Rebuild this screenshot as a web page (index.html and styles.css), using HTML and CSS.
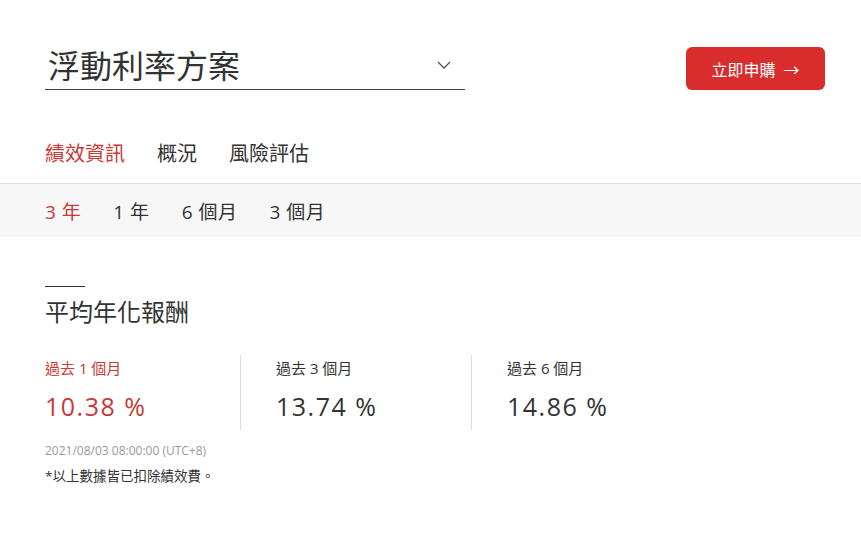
FILE: index.html
```html
<!DOCTYPE html>
<html lang="zh-Hant">
<head>
  <meta charset="UTF-8">
  <title>浮動利率方案</title>
  <link rel="stylesheet" href="styles.css">
</head>
<body>

  <header class="top">
    <div class="picker">
      <span class="picker-title">浮動利率方案</span>
      <svg class="chevron" width="14" height="8" viewBox="0 0 14 8"><path d="M1 1l6 6 6-6" fill="none" stroke="#555" stroke-width="1.3"/></svg>
    </div>
    <button class="apply">立即申購 <span class="arrow">→</span></button>
  </header>

  <nav class="tabs">
    <a class="tab active">績效資訊</a>
    <a class="tab">概況</a>
    <a class="tab">風險評估</a>
  </nav>

  <nav class="periods">
    <a class="period active">3 年</a>
    <a class="period">1 年</a>
    <a class="period">6 個月</a>
    <a class="period">3 個月</a>
  </nav>

  <section class="returns">
    <div class="rule"></div>
    <h2>平均年化報酬</h2>
    <div class="stats">
      <div class="stat active">
        <div class="label">過去 1 個月</div>
        <div class="value">10.38 %</div>
      </div>
      <div class="stat">
        <div class="label">過去 3 個月</div>
        <div class="value">13.74 %</div>
      </div>
      <div class="stat">
        <div class="label">過去 6 個月</div>
        <div class="value">14.86 %</div>
      </div>
    </div>
    <p class="stamp">2021/08/03 08:00:00 (UTC+8)</p>
    <p class="note">*以上數據皆已扣除績效費。</p>
  </section>

</body>
</html>
```

FILE: styles.css
```css
body {
  margin: 0;
  font-family: "Open Sans", "Noto Sans CJK TC", sans-serif;
  background-color: #fff;
  color: #333;
}

.top {
  display: flex;
  justify-content: space-between;
  align-items: flex-start;
  padding: 43px 36px 0 45px;
}

.picker {
  width: 420px;
  height: 47px;
  border-bottom: 1px solid #444;
  display: flex;
  align-items: center;
  justify-content: space-between;
  box-sizing: border-box;
}

.picker-title {
  font-size: 32px;
  color: #333;
  padding-left: 3px;
  line-height: 44px;
}

.chevron {
  margin-right: 14px;
  margin-top: -2px;
}

.apply {
  margin-top: 4px;
  width: 139px;
  height: 43px;
  border: none;
  border-radius: 6px;
  background-color: #d92d2d;
  color: #fff;
  font-family: inherit;
  font-size: 16px;
  cursor: pointer;
}

.arrow {
  margin-left: 4px;
}

.tabs {
  display: flex;
  gap: 32px;
  padding: 0 45px;
  margin-top: 42px;
  height: 51px;
  border-bottom: 1px solid #ddd;
}

.tab {
  font-size: 20px;
  line-height: 44px;
  color: #333;
}

.tab.active {
  color: #c73a36;
}

.periods {
  display: flex;
  gap: 32px;
  padding: 0 45px;
  height: 53px;
  align-items: center;
  background-color: #f7f7f7;
}

.period {
  font-size: 19px;
  color: #333;
  letter-spacing: 0.5px;
}

.period.active {
  color: #c73a36;
}

.returns {
  padding: 49px 45px 0;
}

.rule {
  width: 40px;
  height: 1px;
  background-color: #333;
}

h2 {
  margin: 9px 0 0;
  font-size: 24px;
  font-weight: normal;
  line-height: 32px;
  color: #333;
}

.stats {
  display: flex;
  margin-top: 27px;
}

.stat {
  width: 195px;
  height: 75px;
  padding: 0 0 0 35px;
  border-left: 1px solid #ddd;
}

.stat:first-child {
  padding-left: 0;
  border-left: none;
}

.label {
  font-size: 15px;
  line-height: 22px;
  margin-top: 2px;
  color: #333;
}

.value {
  font-size: 25px;
  letter-spacing: 1.5px;
  margin-top: 13px;
  line-height: 28px;
  color: #333;
}

.stat.active .label,
.stat.active .value {
  color: #c73a36;
}

.stamp {
  margin: 12px 0 0;
  font-size: 12px;
  color: #999;
}

.note {
  margin: 6px 0 0;
  font-size: 13.5px;
  color: #333;
}
```
